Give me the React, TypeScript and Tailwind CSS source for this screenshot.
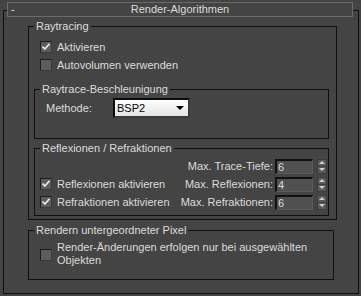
import React from 'react';

const font = { fontFamily: '"Liberation Sans", Arial, sans-serif' };

const Check = ({ checked }: { checked?: boolean }) => (
  <div className="w-[12px] h-[12px] shrink-0 border border-t-[#1c1c1c] border-l-[#1c1c1c] border-r-[#3a3a3a] border-b-[#3a3a3a] bg-[#5c5c5c] flex items-center justify-center">
    {checked && (
      <svg width="10" height="10" viewBox="0 0 10 10">
        <path d="M1.5 4.5 L3.8 7 L8.5 1.8" fill="none" stroke="#e4e4e4" strokeWidth="1.8" />
      </svg>
    )}
  </div>
);

const Group = ({ label, className, children }: { label: string; className?: string; children: React.ReactNode }) => (
  <div className={`relative border border-[#101010] ${className ?? ''}`}>
    <span className="absolute -top-[8px] left-[5px] px-[2px] bg-[#444444] leading-[14px] whitespace-nowrap">{label}</span>
    {children}
  </div>
);

const Spinner = ({ value }: { value: string }) => (
  <div className="flex items-center">
    <div className="w-[38px] h-[15px] bg-[#505050] border-t-2 border-l-2 border-t-[#111] border-l-[#111] border-r border-b border-r-[#5a5a5a] border-b-[#5a5a5a] pl-[1px] leading-[13px]">
      {value}
    </div>
    <div className="ml-[4px] w-[10px] h-[15px] bg-[#595959] border border-[#3c3c3c] flex flex-col">
      <div className="flex-1 flex items-center justify-center border-b border-[#3c3c3c]">
        <svg width="6" height="3" viewBox="0 0 6 3"><path d="M3 0 L6 3 L0 3 Z" fill="#cfcfcf" /></svg>
      </div>
      <div className="flex-1 flex items-center justify-center">
        <svg width="6" height="3" viewBox="0 0 6 3"><path d="M0 0 L6 0 L3 3 Z" fill="#cfcfcf" /></svg>
      </div>
    </div>
  </div>
);

export default function App() {
  return (
    <div className="w-[361px] h-[296px] bg-[#444444] text-[#dcdcdc] text-[11px] pt-[2px]" style={font}>
      <div className="relative z-10 ml-[7px] w-[346px] h-[15px] border border-[#6a6a6a] bg-[#444444] flex items-center">
        <span className="pl-[3px] w-[14px]">-</span>
        <span className="flex-1 text-center pr-[14px]">Render-Algorithmen</span>
      </div>
      <div className="-mt-[7px] ml-[3px] w-[356px] h-[284px] border border-[#101010] pt-[15px] pl-[24px]">
        <Group label="Raytracing" className="w-[309px] h-[194px] pt-[11px] pl-[5px]">
          <div className="ml-[6px] h-[18px] flex items-center gap-[5px]">
            <Check checked />
            <span>Aktivieren</span>
          </div>
          <div className="ml-[6px] h-[18px] flex items-center gap-[5px]">
            <Check />
            <span>Autovolumen verwenden</span>
          </div>
          <Group label="Raytrace-Beschleunigung" className="mt-[15px] w-[295px] h-[50px] pt-[8px] pl-[11px]">
            <div className="flex items-center h-[20px]">
              <span className="w-[67px]">Methode:</span>
              <div className="w-[77px] h-[20px] border-t-2 border-l-2 border-t-[#0a0a0a] border-l-[#0a0a0a] border-r-2 border-b-2 border-r-[#3a3a3a] border-b-[#3a3a3a] bg-gradient-to-b from-[#ffffff] to-[#e4e4e4] text-black flex items-center pl-[2px]">
                <span className="flex-1">BSP2</span>
                <svg width="8" height="4" viewBox="0 0 8 4" className="mr-[4px]"><path d="M0 0 L8 0 L4 4 Z" fill="#000" /></svg>
              </div>
            </div>
          </Group>
          <Group label="Reflexionen / Refraktionen" className="mt-[9px] w-[295px] h-[68px] pt-[8px] pl-[5px] pr-[1px]">
            <div className="h-[18px] flex items-center justify-end gap-[2px]">
              <span>Max. Trace-Tiefe:</span>
              <Spinner value="6" />
            </div>
            <div className="h-[18px] flex items-center gap-[5px]">
              <Check checked />
              <span className="flex-1">Reflexionen aktivieren</span>
              <span className="-mr-[3px]">Max. Reflexionen:</span>
              <Spinner value="4" />
            </div>
            <div className="h-[18px] flex items-center gap-[5px]">
              <Check checked />
              <span className="flex-1">Refraktionen aktivieren</span>
              <span className="-mr-[3px]">Max. Refraktionen:</span>
              <Spinner value="6" />
            </div>
          </Group>
        </Group>
        <Group label="Rendern untergeordneter Pixel" className="mt-[10px] w-[306px] h-[50px] pl-[11px] flex items-center gap-[5px]">
          <Check />
          <span className="leading-[13px] pb-[2px]">
            Render-Änderungen erfolgen nur bei ausgewählten
            <br />
            Objekten
          </span>
        </Group>
      </div>
    </div>
  );
}
